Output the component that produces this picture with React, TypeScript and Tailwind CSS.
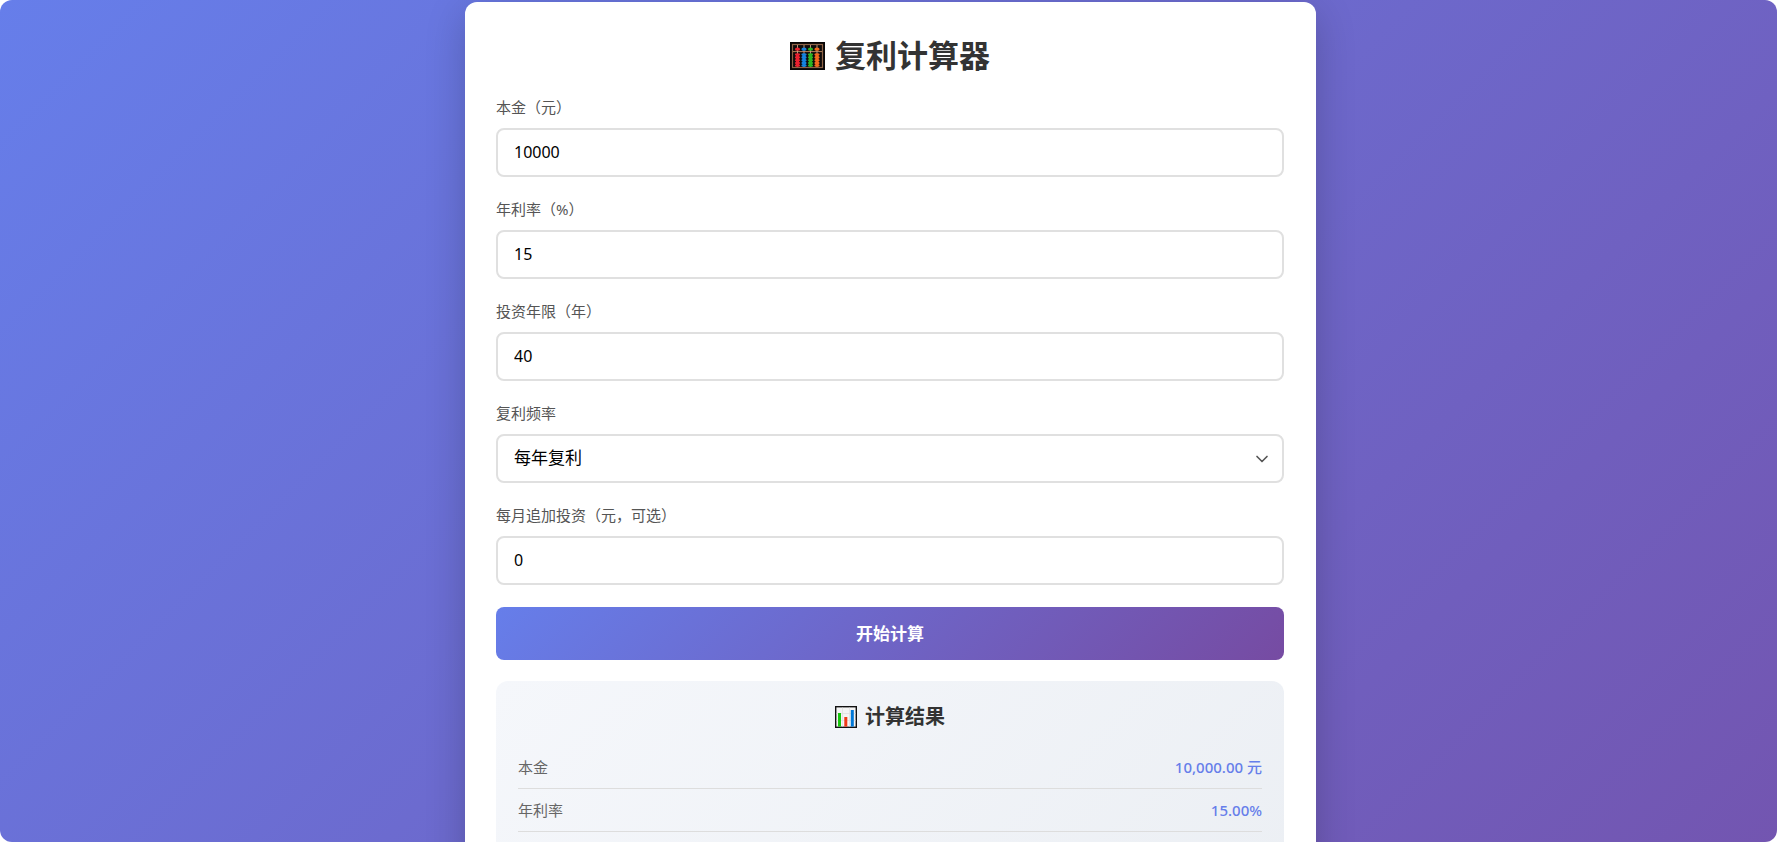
import React, { useState } from "react";
import { ChevronDown } from "lucide-react";

const AbacusIcon = () => {
  const columns = [
    { x: 7.5, color: "#e8202f" },
    { x: 14, color: "#1583dd" },
    { x: 20.5, color: "#2bb523" },
    { x: 27, color: "#f2691d" },
  ];
  return (
    <svg viewBox="0 0 35 28" className="h-7 w-[35px]" aria-hidden="true">
      <rect width="35" height="28" fill="#080606" />
      <rect x="2.5" y="2.5" width="30" height="23" fill="#0f0b0a" stroke="#8d6346" strokeWidth="1.2" />
      <path d="M3 9.6H32" stroke="#b5825a" strokeWidth="1" />
      {columns.map((column) => (
        <g key={column.x} fill={column.color}>
          <path d={`M${column.x} 3V25`} stroke="#c9a184" strokeWidth="0.9" />
          <ellipse cx={column.x} cy="7.2" rx="2.6" ry="1.6" />
          <path d={`M${column.x} 12V24`} stroke={column.color} strokeWidth="3" />
          {[12.6, 15.4, 18.2, 21, 23.6].map((y) => (
            <ellipse key={y} cx={column.x} cy={y} rx="2.7" ry="1.3" />
          ))}
        </g>
      ))}
    </svg>
  );
};

const ChartIcon = () => (
  <svg viewBox="0 0 22 22" className="h-[22px] w-[22px]" aria-hidden="true">
    <rect x="0.7" y="0.7" width="20.6" height="20.6" fill="#f4f4f4" stroke="#111" strokeWidth="1.4" />
    <path d="M1.5 7.5H20.5M1.5 14.5H20.5M7.5 1.5V20.5M14.5 1.5V20.5" stroke="#dcdcdc" strokeWidth="0.7" />
    <rect x="3" y="7" width="3" height="13.6" fill="#16c60c" />
    <rect x="9.3" y="11" width="3" height="9.6" fill="#f03a17" />
    <rect x="15.8" y="4" width="3" height="16.6" fill="#0078d7" />
  </svg>
);

interface FieldProps {
  id: string;
  label: string;
  children: React.ReactNode;
}

const Field = ({ id, label, children }: FieldProps) => (
  <div className="flex flex-col gap-[11px]">
    <label htmlFor={id} className="text-[15px] leading-5 text-[#555]">
      {label}
    </label>
    {children}
  </div>
);

const controlClass =
  "h-[49px] w-full appearance-none rounded-lg border-2 border-[#e0e0e0] bg-white px-4 pb-0.5 text-black outline-none focus:border-[#667eea]";

interface NumberFieldProps {
  id: string;
  label: string;
  value: string;
  onChange: (value: string) => void;
}

const NumberField = ({ id, label, value, onChange }: NumberFieldProps) => (
  <Field id={id} label={label}>
    <input
      id={id}
      type="text"
      inputMode="decimal"
      value={value}
      onChange={(e) => onChange(e.target.value)}
      className={`${controlClass} text-base`}
    />
  </Field>
);

const ResultRow = ({ label, value }: { label: string; value: string }) => (
  <div className="flex h-[43px] items-center justify-between border-b border-[#ddd] text-[15px]">
    <dt className="text-[#666]">{label}</dt>
    <dd className="font-medium text-[#667eea]">{value}</dd>
  </div>
);

const formatMoney = (value: number) =>
  value.toLocaleString("en-US", { minimumFractionDigits: 2, maximumFractionDigits: 2 });

const App: React.FC = () => {
  const [principal, setPrincipal] = useState("10000");
  const [rate, setRate] = useState("15");
  const [years, setYears] = useState("40");
  const [monthly, setMonthly] = useState("0");
  const [result, setResult] = useState({ principal: 10000, rate: 15 });

  const handleSubmit = (e: React.FormEvent) => {
    e.preventDefault();
    setResult({ principal: Number(principal) || 0, rate: Number(rate) || 0 });
  };

  return (
    <div className="h-screen overflow-hidden rounded-xl font-['Noto_Sans','Noto_Sans_CJK_SC',sans-serif]">
      <div className="flex min-h-[1500px] justify-center bg-linear-[135deg,#667eea_0%,#764ba2_100%] pt-0.5 pl-1">
        <main className="w-full max-w-[851px] rounded-xl bg-white pt-8 pr-8 pl-[31px] shadow-[0_10px_40px_rgba(0,0,0,0.2)]">
          <h1 className="mb-5 flex items-center justify-center gap-2.5 text-[31px] leading-[43px] font-bold text-[#333]">
            <AbacusIcon />
            复利计算器
          </h1>

          <form onSubmit={handleSubmit} className="flex flex-col gap-[22px]">
            <NumberField id="principal" label="本金（元）" value={principal} onChange={setPrincipal} />
            <NumberField id="rate" label="年利率（%）" value={rate} onChange={setRate} />
            <NumberField id="years" label="投资年限（年）" value={years} onChange={setYears} />
            <Field id="frequency" label="复利频率">
              <div className="relative">
                <select id="frequency" className={`${controlClass} text-[17px]`}>
                  <option>每年复利</option>
                </select>
                <ChevronDown
                  className="pointer-events-none absolute top-1/2 right-3 h-5 w-5 -translate-y-1/2 text-[#555]"
                  strokeWidth={2}
                />
              </div>
            </Field>
            <NumberField id="monthly" label="每月追加投资（元，可选）" value={monthly} onChange={setMonthly} />
            <button
              type="submit"
              className="h-[53px] rounded-lg bg-linear-[135deg,#667eea_0%,#764ba2_100%] text-[17px] font-semibold text-white"
            >
              开始计算
            </button>
          </form>

          <section className="mt-[21px] min-h-[600px] rounded-xl bg-linear-[135deg,#f5f7fb_0%,#e8ecf1_100%] px-[22px] pt-[22px]">
            <h2 className="mb-[15px] flex items-center justify-center gap-2 text-xl leading-7 font-bold text-[#333]">
              <ChartIcon />
              计算结果
            </h2>
            <dl>
              <ResultRow label="本金" value={`${formatMoney(result.principal)} 元`} />
              <ResultRow label="年利率" value={`${result.rate.toFixed(2)}%`} />
            </dl>
          </section>
        </main>
      </div>
    </div>
  );
};

export default App;
